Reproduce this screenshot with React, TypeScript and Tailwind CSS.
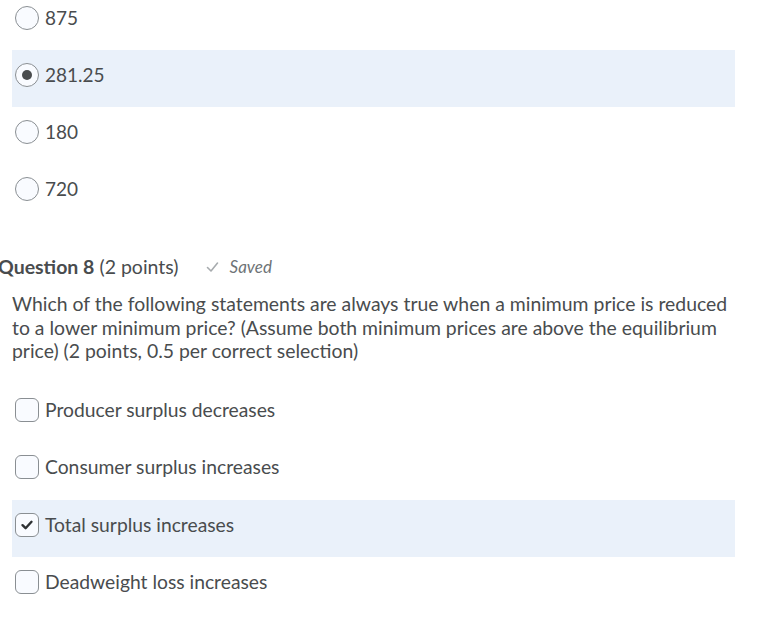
import React from 'react';

const radioOptions = [
  { label: '875', checked: false },
  { label: '281.25', checked: true },
  { label: '180', checked: false },
  { label: '720', checked: false },
];

const checkOptions = [
  { label: 'Producer surplus decreases', checked: false },
  { label: 'Consumer surplus increases', checked: false },
  { label: 'Total surplus increases', checked: true },
  { label: 'Deadweight loss increases', checked: false },
];

function Radio({ checked }: { checked: boolean }) {
  return (
    <div className="w-[24px] h-[24px] rounded-full border border-[#8a8f93] bg-[#f9fbff] flex items-center justify-center shrink-0">
      {checked && <div className="w-[10px] h-[10px] rounded-full bg-[#494c4e]" />}
    </div>
  );
}

function Checkbox({ checked }: { checked: boolean }) {
  return (
    <div className="w-[24px] h-[24px] rounded-[6px] border border-[#8a8f93] bg-[#f9fbff] flex items-center justify-center shrink-0">
      {checked && (
        <svg width="14" height="14" viewBox="0 0 14 14" fill="none">
          <path d="M2.5 7.2 L5.6 10.2 L11.5 3.8" stroke="#2e3133" strokeWidth="2.4" strokeLinecap="round" strokeLinejoin="round" />
        </svg>
      )}
    </div>
  );
}

export default function App() {
  return (
    <div className="w-[780px] h-[620px] overflow-hidden bg-white text-[#494c4e] font-['Lato','Liberation_Sans',sans-serif]">
      {/* Previous question options */}
      <div className="-mt-[7px]">
        {radioOptions.map((o) => (
          <div
            key={o.label}
            className={`ml-[12px] w-[723px] h-[57px] pt-[13px] pl-[3px] flex items-start gap-[6px] ${o.checked ? 'bg-[#eaf1fa]' : ''}`}
          >
            <Radio checked={o.checked} />
            <span className="text-[19px] leading-[24px]">{o.label}</span>
          </div>
        ))}
      </div>

      {/* Question 8 */}
      <div className="mt-[34px] -ml-[2px] flex items-center h-[24px]">
        <span className="text-[19.5px] font-bold">Question 8</span>
        <span className="text-[19.5px] ml-[5px]">(2 points)</span>
        <svg className="ml-[27px]" width="13" height="12" viewBox="0 0 13 12" fill="none">
          <path d="M1.5 6.5 L5 10 L11.5 2" stroke="#a7abae" strokeWidth="1.6" strokeLinecap="round" strokeLinejoin="round" />
        </svg>
        <span className="ml-[11px] text-[17px] italic text-[#6e7376]">Saved</span>
      </div>

      <p className="ml-[12px] mt-[13px] w-[725px] text-[19.4px] leading-[23.5px]">
        Which of the following statements are always true when a minimum price is reduced to a lower minimum price? (Assume both minimum prices are above the equilibrium price) (2 points, 0.5 per correct selection)
      </p>

      <div className="mt-[22px]">
        {checkOptions.map((o) => (
          <div
            key={o.label}
            className={`ml-[12px] w-[723px] h-[57.5px] pt-[13px] pl-[3px] flex items-start gap-[6px] ${o.checked ? 'bg-[#eaf1fa]' : ''}`}
          >
            <Checkbox checked={o.checked} />
            <span className="text-[19.3px] leading-[24px]">{o.label}</span>
          </div>
        ))}
      </div>
    </div>
  );
}
